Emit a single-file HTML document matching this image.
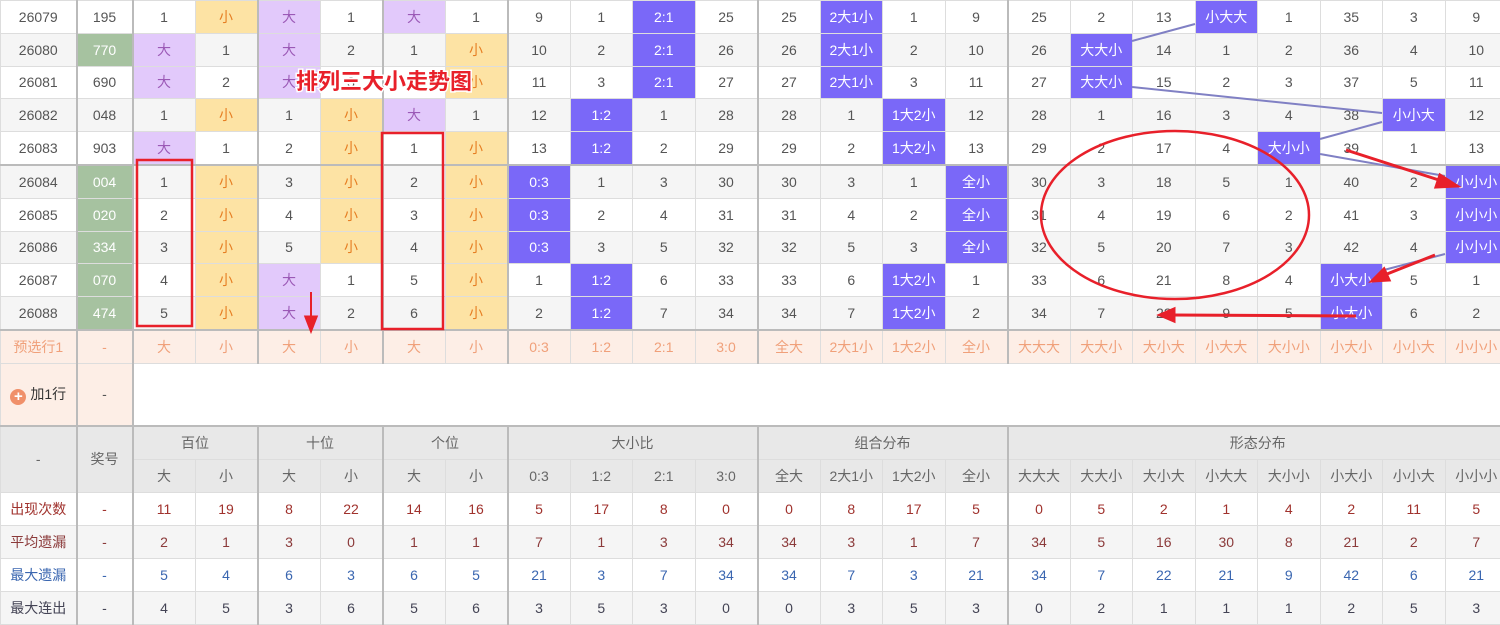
<!DOCTYPE html>
<html><head><meta charset="utf-8">
<style>
body{margin:0;width:1500px;height:625px;overflow:hidden;background:#fff;font-family:"Liberation Sans","Noto Sans CJK SC",sans-serif;position:relative}
table{position:absolute;left:0;top:0;border-collapse:collapse;table-layout:fixed;width:1507px;font-size:14px;color:#555}
td{border:1px solid #ddd;text-align:center;padding:0;white-space:nowrap;overflow:hidden}
tr.r td{height:31.8px}
tr.s td{height:32px}
tr.r:nth-child(even) td,tr.s:nth-child(even) td{background:#f5f5f5}
tr.r td:nth-child(2),tr.r td:nth-child(3),tr.r td:nth-child(5),tr.r td:nth-child(7),tr.r td:nth-child(9),tr.r td:nth-child(13),tr.r td:nth-child(17),
tr.s td:nth-child(2),tr.s td:nth-child(3),tr.s td:nth-child(5),tr.s td:nth-child(7),tr.s td:nth-child(9),tr.s td:nth-child(13),tr.s td:nth-child(17),
tr.p td:nth-child(2),tr.p td:nth-child(3),tr.p td:nth-child(5),tr.p td:nth-child(7),tr.p td:nth-child(9),tr.p td:nth-child(13),tr.p td:nth-child(17){border-left:2px solid #bbb}
.L{border-left:2px solid #bbb}
tr.sep td{border-top:2px solid #bbb}
tr.r td.d{background:#e2c9fb;color:#9b59b6}
tr.r td.x{background:#fde3a4;color:#e67e22}
tr.r td.b{background:#7a68f8;color:#fff}
tr.r td.g{background:#a6c2a0;color:#fff}
tr.p td{background:#fdeee6;color:#f0a07a;height:32px}
.h td{background:#e8e8e8;color:#666;height:32px}
.c1 td{color:#a0322d}.c2 td{color:#8b3a3a}.c3 td{color:#3a66b0}.c4 td{color:#445}
.c2 td:first-child{color:#8b3a3a}
</style></head><body>
<table>
<colgroup><col style="width:76px"><col style="width:56px"><col span="22" style="width:62.5px"></colgroup>
<tr class="r"><td>26079</td><td>195</td><td>1</td><td class="x">小</td><td class="d">大</td><td>1</td><td class="d">大</td><td>1</td><td>9</td><td>1</td><td class="b">2:1</td><td>25</td><td>25</td><td class="b">2大1小</td><td>1</td><td>9</td><td>25</td><td>2</td><td>13</td><td class="b">小大大</td><td>1</td><td>35</td><td>3</td><td>9</td></tr>
<tr class="r"><td>26080</td><td class="g">770</td><td class="d">大</td><td>1</td><td class="d">大</td><td>2</td><td>1</td><td class="x">小</td><td>10</td><td>2</td><td class="b">2:1</td><td>26</td><td>26</td><td class="b">2大1小</td><td>2</td><td>10</td><td>26</td><td class="b">大大小</td><td>14</td><td>1</td><td>2</td><td>36</td><td>4</td><td>10</td></tr>
<tr class="r"><td>26081</td><td>690</td><td class="d">大</td><td>2</td><td class="d">大</td><td>3</td><td>2</td><td class="x">小</td><td>11</td><td>3</td><td class="b">2:1</td><td>27</td><td>27</td><td class="b">2大1小</td><td>3</td><td>11</td><td>27</td><td class="b">大大小</td><td>15</td><td>2</td><td>3</td><td>37</td><td>5</td><td>11</td></tr>
<tr class="r"><td>26082</td><td>048</td><td>1</td><td class="x">小</td><td>1</td><td class="x">小</td><td class="d">大</td><td>1</td><td>12</td><td class="b">1:2</td><td>1</td><td>28</td><td>28</td><td>1</td><td class="b">1大2小</td><td>12</td><td>28</td><td>1</td><td>16</td><td>3</td><td>4</td><td>38</td><td class="b">小小大</td><td>12</td></tr>
<tr class="r"><td>26083</td><td>903</td><td class="d">大</td><td>1</td><td>2</td><td class="x">小</td><td>1</td><td class="x">小</td><td>13</td><td class="b">1:2</td><td>2</td><td>29</td><td>29</td><td>2</td><td class="b">1大2小</td><td>13</td><td>29</td><td>2</td><td>17</td><td>4</td><td class="b">大小小</td><td>39</td><td>1</td><td>13</td></tr>
<tr class="r sep"><td>26084</td><td class="g">004</td><td>1</td><td class="x">小</td><td>3</td><td class="x">小</td><td>2</td><td class="x">小</td><td class="b">0:3</td><td>1</td><td>3</td><td>30</td><td>30</td><td>3</td><td>1</td><td class="b">全小</td><td>30</td><td>3</td><td>18</td><td>5</td><td>1</td><td>40</td><td>2</td><td class="b">小小小</td></tr>
<tr class="r"><td>26085</td><td class="g">020</td><td>2</td><td class="x">小</td><td>4</td><td class="x">小</td><td>3</td><td class="x">小</td><td class="b">0:3</td><td>2</td><td>4</td><td>31</td><td>31</td><td>4</td><td>2</td><td class="b">全小</td><td>31</td><td>4</td><td>19</td><td>6</td><td>2</td><td>41</td><td>3</td><td class="b">小小小</td></tr>
<tr class="r"><td>26086</td><td class="g">334</td><td>3</td><td class="x">小</td><td>5</td><td class="x">小</td><td>4</td><td class="x">小</td><td class="b">0:3</td><td>3</td><td>5</td><td>32</td><td>32</td><td>5</td><td>3</td><td class="b">全小</td><td>32</td><td>5</td><td>20</td><td>7</td><td>3</td><td>42</td><td>4</td><td class="b">小小小</td></tr>
<tr class="r"><td>26087</td><td class="g">070</td><td>4</td><td class="x">小</td><td class="d">大</td><td>1</td><td>5</td><td class="x">小</td><td>1</td><td class="b">1:2</td><td>6</td><td>33</td><td>33</td><td>6</td><td class="b">1大2小</td><td>1</td><td>33</td><td>6</td><td>21</td><td>8</td><td>4</td><td class="b">小大小</td><td>5</td><td>1</td></tr>
<tr class="r"><td>26088</td><td class="g">474</td><td>5</td><td class="x">小</td><td class="d">大</td><td>2</td><td>6</td><td class="x">小</td><td>2</td><td class="b">1:2</td><td>7</td><td>34</td><td>34</td><td>7</td><td class="b">1大2小</td><td>2</td><td>34</td><td>7</td><td>22</td><td>9</td><td>5</td><td class="b">小大小</td><td>6</td><td>2</td></tr>
<tr class="p sep"><td>预选行1</td><td>-</td><td>大</td><td>小</td><td>大</td><td>小</td><td>大</td><td>小</td><td>0:3</td><td>1:2</td><td>2:1</td><td>3:0</td><td>全大</td><td>2大1小</td><td>1大2小</td><td>全小</td><td>大大大</td><td>大大小</td><td>大小大</td><td>小大大</td><td>大小小</td><td>小大小</td><td>小小大</td><td>小小小</td></tr>
<tr><td style="background:#fdeee6;height:61px;color:#333"><span style="display:inline-block;width:16px;height:16px;border-radius:50%;background:#f0906a;color:#fff;font-size:15px;line-height:16px;font-weight:bold;vertical-align:-2px;margin-right:4px">+</span>加1行</td><td style="background:#fdeee6;border-left:2px solid #bbb">-</td><td colspan="22" class="L"></td></tr>
<tr class="h sep"><td rowspan="2">-</td><td rowspan="2" class="L">奖号</td><td colspan="2" class="L">百位</td><td colspan="2" class="L">十位</td><td colspan="2" class="L">个位</td><td colspan="4" class="L">大小比</td><td colspan="4" class="L">组合分布</td><td colspan="8" class="L">形态分布</td></tr>
<tr class="h"><td class="L">大</td><td>小</td><td class="L">大</td><td>小</td><td class="L">大</td><td>小</td><td class="L">0:3</td><td>1:2</td><td>2:1</td><td>3:0</td><td class="L">全大</td><td>2大1小</td><td>1大2小</td><td>全小</td><td class="L">大大大</td><td>大大小</td><td>大小大</td><td>小大大</td><td>大小小</td><td>小大小</td><td>小小大</td><td>小小小</td></tr>
<tr class="s c1"><td>出现次数</td><td>-</td><td>11</td><td>19</td><td>8</td><td>22</td><td>14</td><td>16</td><td>5</td><td>17</td><td>8</td><td>0</td><td>0</td><td>8</td><td>17</td><td>5</td><td>0</td><td>5</td><td>2</td><td>1</td><td>4</td><td>2</td><td>11</td><td>5</td></tr>
<tr class="s c2"><td>平均遗漏</td><td>-</td><td>2</td><td>1</td><td>3</td><td>0</td><td>1</td><td>1</td><td>7</td><td>1</td><td>3</td><td>34</td><td>34</td><td>3</td><td>1</td><td>7</td><td>34</td><td>5</td><td>16</td><td>30</td><td>8</td><td>21</td><td>2</td><td>7</td></tr>
<tr class="s c3"><td>最大遗漏</td><td>-</td><td>5</td><td>4</td><td>6</td><td>3</td><td>6</td><td>5</td><td>21</td><td>3</td><td>7</td><td>34</td><td>34</td><td>7</td><td>3</td><td>21</td><td>34</td><td>7</td><td>22</td><td>21</td><td>9</td><td>42</td><td>6</td><td>21</td></tr>
<tr class="s c4"><td>最大连出</td><td>-</td><td>4</td><td>5</td><td>3</td><td>6</td><td>5</td><td>6</td><td>3</td><td>5</td><td>3</td><td>0</td><td>0</td><td>3</td><td>5</td><td>3</td><td>0</td><td>2</td><td>1</td><td>1</td><td>1</td><td>2</td><td>5</td><td>3</td></tr>
</table>
<svg width="1500" height="625" style="position:absolute;left:0;top:0" xmlns="http://www.w3.org/2000/svg">
<g stroke="#8080c4" stroke-width="2" fill="none">
<line x1="1195" y1="24" x2="1132" y2="41"/>
<line x1="1132" y1="87" x2="1382" y2="113"/>
<line x1="1382" y1="122" x2="1320" y2="139"/>
<line x1="1320" y1="154" x2="1445" y2="176"/>
<line x1="1445" y1="254" x2="1380" y2="271"/>
</g>
<g stroke="#e8202a" stroke-width="2.5" fill="none">
<rect x="137" y="160" width="55" height="166"/>
<rect x="382" y="133" width="61" height="196"/>
<ellipse cx="1175" cy="215" rx="134" ry="84"/>
</g>
<g stroke="#e8202a" stroke-width="3" fill="#e8202a">
<line x1="1346" y1="150" x2="1445" y2="182"/>
<polygon points="1457,186 1440,175 1436,187"/>
<line x1="1435" y1="255" x2="1382" y2="276"/>
<polygon points="1372,281 1384,269 1389,280"/>
<line x1="1356" y1="316" x2="1172" y2="315"/>
<polygon points="1160,315 1174,309 1174,321"/>
<line x1="311" y1="292" x2="311" y2="320" stroke-width="2"/>
<polygon points="311,330 306,317 316,317"/>
</g>
<text x="296" y="89" font-family="Liberation Sans,Noto Sans CJK SC,sans-serif" font-size="22" font-weight="bold" fill="#e8202a" stroke="#fff" stroke-width="3" paint-order="stroke">排列三大小走势图</text>
</svg>
</body></html>
